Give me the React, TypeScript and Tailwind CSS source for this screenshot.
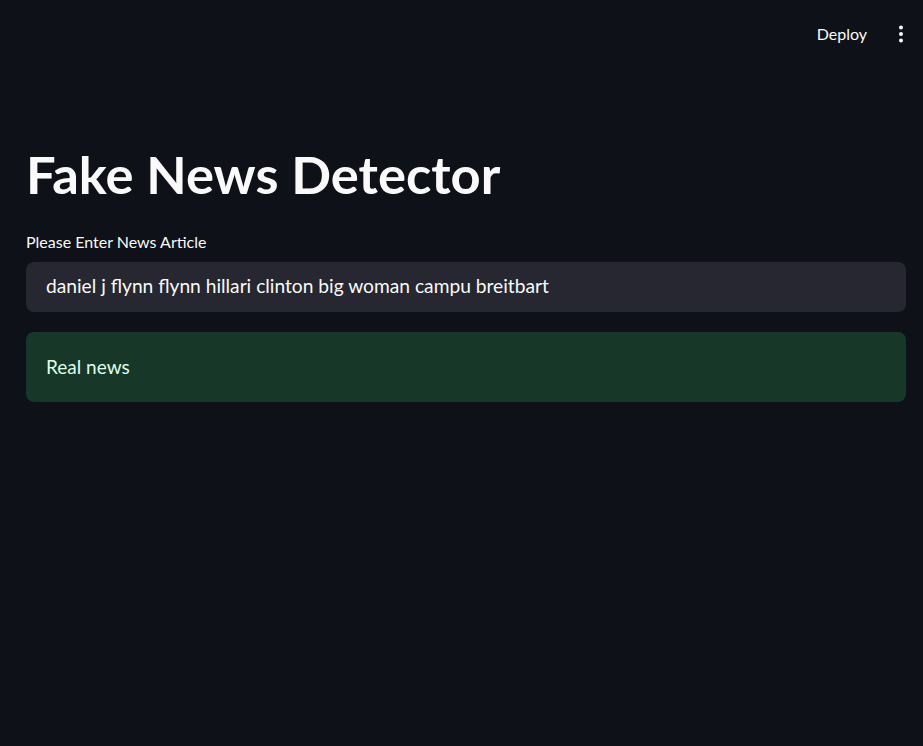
import { useState } from "react";

export default function App() {
  const [text, setText] = useState("daniel j flynn flynn hillari clinton big woman campu breitbart");

  return (
    <div className="min-h-screen bg-[#0e1117] text-[#fafafa] font-['Lato',sans-serif]">
      {/* header */}
      <header className="h-[60px] flex items-center justify-end pr-[10px] pt-[8px]">
        <button className="text-[16px] px-3 py-1 text-[#fafafa]">Deploy</button>
        <button className="ml-[10px] w-6 h-6 flex items-center justify-center" aria-label="menu">
          <svg width="6" height="18" viewBox="0 0 6 18" fill="#fafafa">
            <circle cx="3" cy="2.5" r="2" />
            <circle cx="3" cy="9" r="2" />
            <circle cx="3" cy="15.5" r="2" />
          </svg>
        </button>
      </header>

      <main className="px-[26px] pr-[17px] pt-[84px]">
        <h1 className="text-[52.5px] font-bold leading-[60px]">Fake News Detector</h1>

        <label className="block mt-[28px] text-[16px] leading-5">Please Enter News Article</label>
        <input
          value={text}
          onChange={(e) => setText(e.target.value)}
          className="mt-[10px] w-full h-[50px] rounded-lg bg-[#262730] px-5 pb-[4px] text-[19.2px] text-[#fafafa] outline-none"
        />

        <div className="mt-[20px] h-[70px] rounded-lg bg-[#173828] px-5 flex items-center text-[19px] text-[#dffde9]">
          Real news
        </div>
      </main>
    </div>
  );
}
